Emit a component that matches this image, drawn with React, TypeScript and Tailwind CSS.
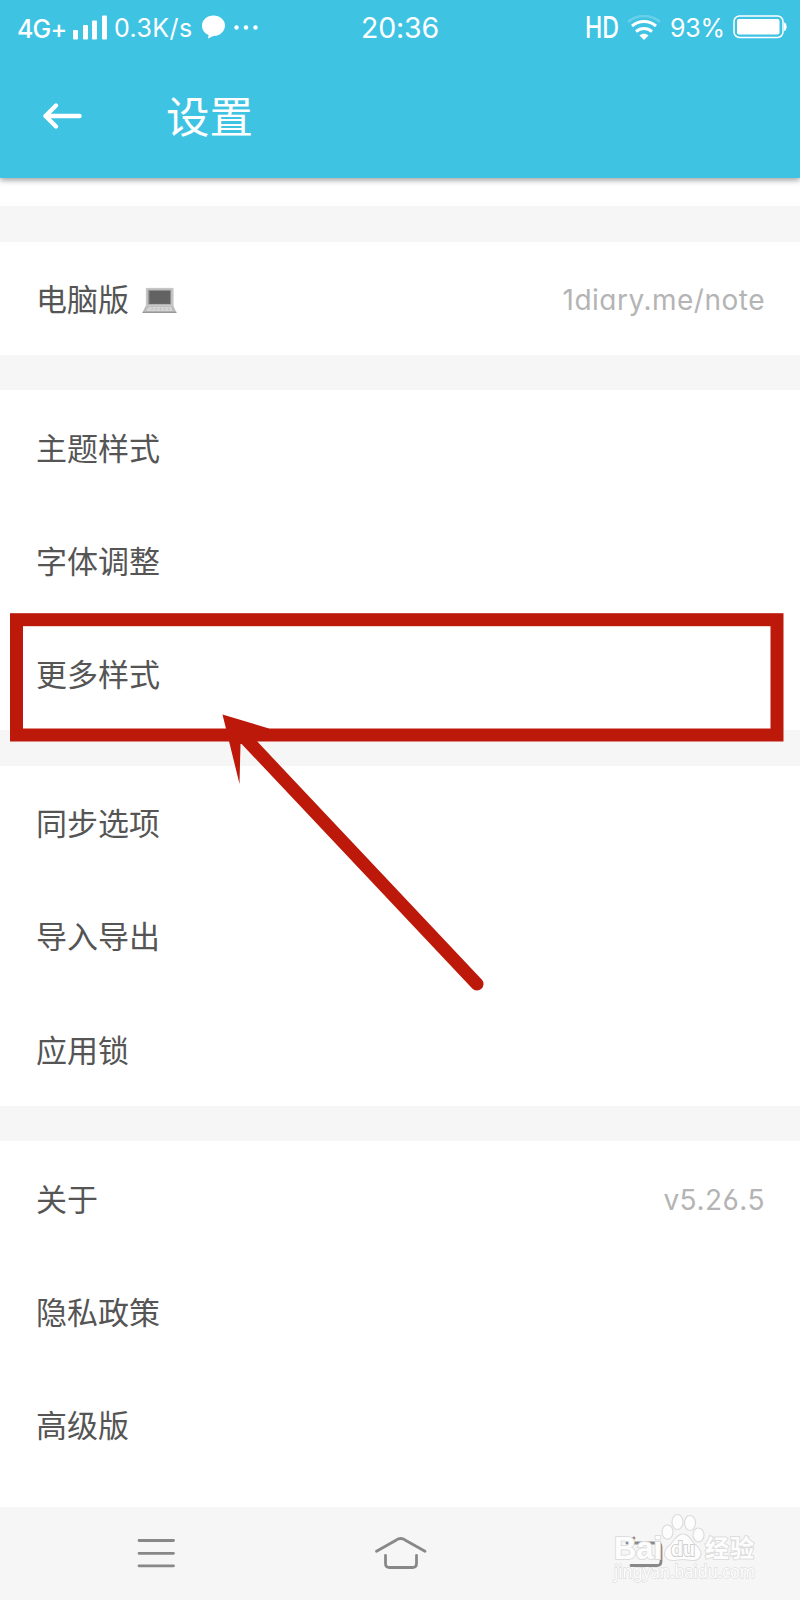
import type { ReactNode } from "react";

type Item = { label: string; value?: string; icon?: ReactNode };

function Laptop() {
  return (
    <svg width="35" height="28" viewBox="0 0 36 28">
      <path d="M4 0.5h28.5v20H4z" fill="#c6c6c6" />
      <path d="M6 2.5h24v15H6z" fill="#9a9a9a" />
      <path d="M7.5 3.5h21.5v13.5H7.5z" fill="#626262" />
      <path d="M3.5 19.5h29L35.5 26H0.5z" fill="#bcbcbc" />
      <path d="M7 20.5h23l1.5 3.5h-27z" fill="#dedede" />
      <path d="M6.5 22.2h24M11 20.7l-1 3.2M15 20.7l-.5 3.2M19 20.7v3.2M23 20.7l.5 3.2M27 20.7l1 3.2" stroke="#b5b5b5" strokeWidth=".6" />
      <path d="M0.5 25.6h35" stroke="#858585" />
    </svg>
  );
}

const groups: Item[][] = [
  [{ label: "电脑版", value: "1diary.me/note", icon: <Laptop /> }],
  [{ label: "主题样式" }, { label: "字体调整" }, { label: "更多样式" }],
  [{ label: "同步选项" }, { label: "导入导出" }, { label: "应用锁" }],
  [{ label: "关于", value: "v5.26.5" }, { label: "隐私政策" }, { label: "高级版" }],
];

function Row({ label, value, icon }: Item) {
  return (
    <div className="flex h-[113.3px] items-center pr-[35px] pl-9">
      <span className="pb-[2px] text-[31px] leading-none text-[#555]">{label}</span>
      {icon && <span className="ml-[13px] pt-[6px]">{icon}</span>}
      {value && (
        <span className="ml-auto pt-[4px] font-['Inter','Noto_Sans_CJK_SC',sans-serif] text-[28px] leading-none tracking-[0.5px] text-[#b4b4b4] [font-feature-settings:'cv11','ss01']">
          {value}
        </span>
      )}
    </div>
  );
}

function StatusBar() {
  return (
    <div className="grid h-[56px] grid-cols-3 items-center font-['Inter',sans-serif] leading-none text-white">
      <div className="flex items-center pl-[17px] whitespace-nowrap">
        <span className="mt-[2px] w-[55px] text-[25px] font-medium tracking-[-0.8px]">4G+</span>
        <svg width="36" height="26" viewBox="0 0 36 26" fill="white">
          <rect x="1" y="15" width="5" height="9.500" rx="1" />
          <rect x="11" y="10" width="5" height="14.500" rx="1" />
          <rect x="20" y="5.500" width="5" height="19" rx="1" />
          <rect x="30" y="0.500" width="5" height="24" rx="1" />
        </svg>
        <span className="ml-[6px] w-[80px] text-[25px] tracking-[0.4px]">0.3K/s</span>
        <svg className="ml-[7px]" width="60" height="26" viewBox="0 0 60 26" fill="white">
          <path d="M12.500 0.500C19 0.500 24 5 24 10.500s-5 10.500-11.500 10.500L7 23.500l.6-3.600C3.500 18.500 1 15 1 10.500 1 5 6 0.500 12.500 0.500z" />
          <circle cx="35.500" cy="12.500" r="2.200" />
          <circle cx="45" cy="12.500" r="2.200" />
          <circle cx="54.500" cy="12.500" r="2.200" />
        </svg>
      </div>
      <div className="text-center text-[28.5px] tracking-[-0.2px]">20:36</div>
      <div className="flex items-center justify-end pr-[12px]">
        <svg className="mr-[4px]" width="40" height="42" viewBox="0 0 40 42" fill="white">
          <text x="2" y="31" fontSize="29.500" fontWeight="500" textLength="34" lengthAdjust="spacingAndGlyphs">HD</text>
        </svg>
        <svg width="34" height="26" viewBox="0 0 34 26" fill="none" stroke="white" strokeWidth="3">
          <path d="M1 7C10-1 24-1 33 7" opacity=".22" strokeWidth="2.500" />
          <path d="M5 11c7-6 17-6 24 0M9 16.500c4.800-4 11.200-4 16 0" />
          <path d="M12.500 20.500c2.500-2.400 6.500-2.400 9 0L17 25z" fill="white" stroke="none" />
        </svg>
        <span className="ml-[9px] w-[57px] text-[25px] tracking-[-0.2px]">93%</span>
        <svg className="ml-[6px]" width="55" height="26" viewBox="0 0 55 26" fill="none" stroke="white">
          <rect x="1" y="1" width="49" height="21.500" rx="5.500" strokeWidth="1.500" />
          <rect x="4" y="4" width="42.500" height="15.500" rx="2" fill="white" stroke="none" />
          <path d="M51 7.500c3.500 0 3.500 8.500 0 8.500z" fill="white" stroke="none" />
        </svg>
      </div>
    </div>
  );
}

function Watermark() {
  return (
    <svg className="absolute top-[1508px] left-[608px]" width="160" height="88" viewBox="0 0 160 88" fill="#fdfdfd" stroke="#dddddd">
      <g strokeWidth="1.200">
        <ellipse cx="59.500" cy="24" rx="5.500" ry="7.200" />
        <ellipse cx="69.500" cy="14" rx="5.500" ry="7.500" />
        <ellipse cx="82" cy="15" rx="5.500" ry="7.500" />
        <ellipse cx="90.500" cy="27" rx="5.500" ry="7" />
        <path d="M75 26c-5 0-7.500 4-10.500 8-3 4-8 6-8 11.500 0 5 4 7 8 7 4 0 7-1 10.500-1s6.500 1 10.500 1c4 0 7.500-2.500 7.500-7 0-5.500-5-7.500-8-11.500-3-4-5-8-10-8z" />
      </g>
      <g fontFamily="Liberation Sans" fontWeight="bold" paintOrder="stroke" strokeWidth="2">
        <text x="6" y="50.500" fontSize="32" textLength="48" lengthAdjust="spacingAndGlyphs">Bai</text>
        <text x="63" y="48" fontSize="21" textLength="24" lengthAdjust="spacingAndGlyphs" stroke="#cfcfcf">du</text>
        <text x="97" y="49" fontSize="24" fontFamily="Noto Sans CJK SC" textLength="49">经验</text>
      </g>
      <text x="6" y="69.500" fontFamily="Noto Sans" fontSize="17.500" textLength="141" lengthAdjust="spacingAndGlyphs" paintOrder="stroke" strokeWidth="1.400" stroke="#dedede">jingyan.baidu.com</text>
    </svg>
  );
}

export default function App() {
  return (
    <div className="relative flex h-[1600px] w-[800px] flex-col overflow-hidden bg-white font-['Noto_Sans_CJK_SC',sans-serif]">
      <header className="z-10 h-[178px] shrink-0 bg-[#3fc3e3] shadow-[0_2px_6px_rgba(0,0,0,0.4)]">
        <StatusBar />
        <div className="flex h-[119px] items-center pl-[42px] text-white">
          <svg width="42" height="28" viewBox="0 0 42 28" fill="none" stroke="white" strokeWidth="4.400" strokeLinecap="round" strokeLinejoin="round">
            <path d="M37.500 14H3.500M14 3.500L3.500 14 14 24.500" />
          </svg>
          <h1 className="-mt-px ml-[82px] text-[43.500px] leading-none">设置</h1>
        </div>
      </header>
      <main className="flex-1 pt-7">
        {groups.map((items, i) => (
          <section key={i}>
            <div className="h-[35.6px] bg-[#f6f6f6]" />
            {items.map((item) => (
              <Row key={item.label} {...item} />
            ))}
          </section>
        ))}
      </main>
      <nav className="flex h-[93px] shrink-0 items-center bg-[#f6f6f6]">
        <svg width="800" height="93" viewBox="0 0 800 93" fill="none" stroke="#888" strokeWidth="2.800" strokeLinecap="round" strokeLinejoin="round">
          <path d="M139 33.500h34.500M139 46.300h34.500M139 58.800h34.500" />
          <path d="M376.500 44.300L396 33.200q4.700-3.400 9.400 0L425 44.300M385.500 48.500v8q0 4 4 4h23q4 0 4-4v-8" />
          <path d="M634 31l-7 5M627 36h30q4 0 4 4v14.500q0 4-4 4h-26" />
        </svg>
      </nav>
      <Watermark />
      <svg className="absolute top-[600px] left-0" width="800" height="400" viewBox="0 600 800 400">
        <rect x="16.500" y="619.700" width="760.500" height="115.300" fill="none" stroke="#bd190a" strokeWidth="13" />
        <path d="M245 738L477 984" stroke="#bd190a" strokeWidth="13" strokeLinecap="round" />
        <path d="M222.500 714.500L269 728.500 250 744 240.500 744 239.500 784z" fill="#bd190a" />
      </svg>
    </div>
  );
}
